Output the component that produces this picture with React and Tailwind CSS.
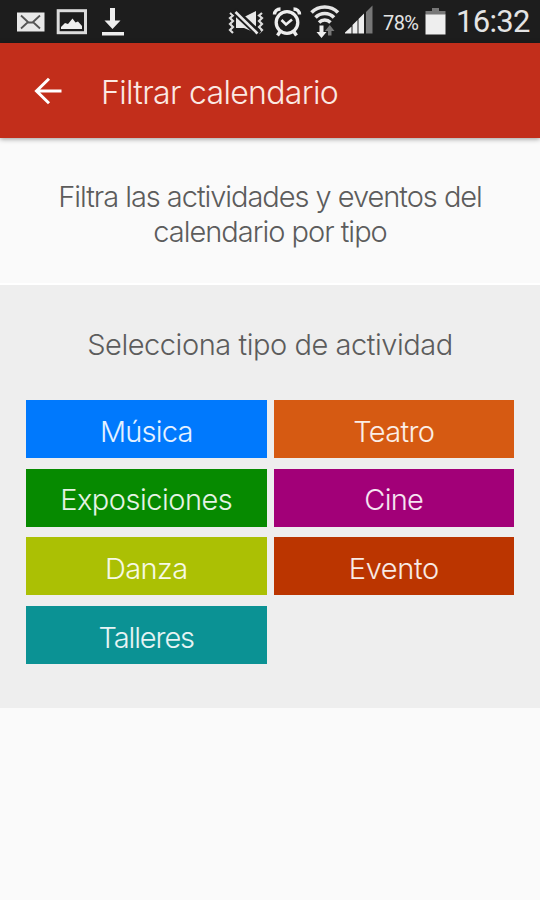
import clsx from 'clsx';

const categories = [
  { name: 'Música', color: 'bg-[#0079fd]', text: 'tracking-[-0.8px]' },
  { name: 'Teatro', color: 'bg-[#d65a12]', text: 'tracking-[-0.7px]' },
  { name: 'Exposiciones', color: 'bg-[#068a00]', text: 'tracking-[-0.5px]' },
  { name: 'Cine', color: 'bg-[#a20078]', text: 'tracking-[-0.7px]' },
  { name: 'Danza', color: 'bg-[#abc004]', text: 'tracking-[-0.6px]' },
  { name: 'Evento', color: 'bg-[#bb3500]', text: 'tracking-[-0.4px]' },
  { name: 'Talleres', color: 'bg-[#0b9294]', text: 'tracking-[-1.1px]' },
];

function NotificationIcons() {
  return (
    <svg className="block h-[43px] w-[130px]" viewBox="0 0 130 43" fill="none">
      <rect x="17" y="12.500" width="27.500" height="19" fill="#e8e8e8" />
      <path d="M21 15.500l7.500 7h4l7.500-7M21 28.500l6.500-6M40 28.500l-6.500-6" stroke="#555" strokeWidth="1.800" />
      <rect x="58.200" y="10.700" width="27.300" height="22" stroke="#dcdcdc" strokeWidth="3" />
      <path d="M61 29v-2l4-4 3 1 4.500-5.500 3 4 2.500-1 4 4.500v3z" fill="#eee" />
      <path d="M110 8h5v12.500h5.500L112.500 29l-8-8.500h5.500z" fill="#eee" />
      <rect x="102" y="32" width="22" height="3.500" fill="#eee" />
    </svg>
  );
}

function SystemIcons() {
  return (
    <svg className="block h-[43px] w-[150px]" viewBox="225 0 150 43" fill="none">
      {/* silent */}
      <path d="M230 13l3 2.500-3 2.500 3 3-3 3 3 3-3 3 3 3M262 13l-3 2.500 3 2.500-3 3 3 3-3 3 3 3-3 3" stroke="#ddd" strokeWidth="2.200" />
      <path d="M236 16.500v11.500h8l12 5V11l-11 5.500z" fill="#e8e8e8" />
      <path d="M234 10.500l25 23.500" stroke="#1d1d1d" strokeWidth="7" />
      <path d="M235.500 12l22 21.500" stroke="#e8e8e8" strokeWidth="2.600" />
      {/* alarm */}
      <circle cx="287" cy="22.500" r="10.800" stroke="#eee" strokeWidth="3.300" />
      <path d="M281.500 20l4.500 4.500 6-5" stroke="#eee" strokeWidth="2.600" />
      <path d="M274.500 14.500c0-3.500 2.500-5.500 6-5.500M299.500 14.500c0-3.500-2.500-5.500-6-5.500M280.500 31l-3 4.500M293.500 31l3 4.500" stroke="#eee" strokeWidth="3.400" />
      {/* wifi */}
      <path d="M311.500 12.500c7-7.500 19.500-7.500 26.500 0M315.500 17.500c5-5.300 13.500-5.300 18.500 0M319 22.500c3.200-3.200 8.300-3.200 11.500 0" stroke="#e6e6e6" strokeWidth="3.500" />
      <path d="M319.500 25.500h4v6.500h3l-5 6-5-6h3z" fill="#eee" />
      <path d="M328 35.500h3.500v-4.500h3l-4.700-6-4.800 6h3z" fill="#777" />
      {/* signal */}
      <path d="M345 33.500v-1l6.500-6v7z" fill="#eee" />
      <path d="M352.500 33.500v-8.500l5-5v13.500zM358.500 33.500V19l5.500-5.500v20z" fill="#eee" />
      <path d="M366 33.500V12l6.500-6.500v28z" fill="#777" />
    </svg>
  );
}

function StatusBar() {
  return (
    <div className="flex h-[43px] items-center justify-between bg-[#1d1d1d] font-[Roboto,sans-serif] text-[#e4e4e4]">
      <NotificationIcons />
      <div className="flex items-center">
        <SystemIcons />
        <span className="ml-2 w-[38px] pt-0.5 text-[20px] tracking-[-0.6px]">78%</span>
        <svg className="ml-[4px] block h-[43px] w-[22px]" viewBox="0 0 22 43">
          <path d="M7 8h7v3h6.500v4h-20v-4H7z" fill="#777" />
          <rect x="0.500" y="14.500" width="20" height="20" fill="#eee" />
        </svg>
        <span className="mr-[9px] ml-[9px] w-[75px] text-[31px] leading-[43px] tracking-[-0.7px] whitespace-nowrap">16:32</span>
      </div>
    </div>
  );
}

function CategoryButton({ name, color, text }) {
  return (
    <button
      type="button"
      className={clsx('flex h-[58px] items-center justify-center pt-[5px] text-[29px] font-light text-white/90', color, text)}
    >
      {name}
    </button>
  );
}

export default function App() {
  return (
    <div className="flex h-[900px] w-[540px] flex-col overflow-hidden bg-[#fafafa] font-[Inter,'Liberation_Sans',sans-serif]">
      <StatusBar />
      <header className="z-10 flex h-[95px] shrink-0 items-center bg-[#c22e1b] shadow-[0_1px_5px_rgba(0,0,0,0.4)]">
        <button type="button" className="ml-[34px]" aria-label="Volver">
          <svg className="block h-[28px] w-[28px]" viewBox="0 0 28 28" fill="none" stroke="#fff" strokeWidth="3">
            <path d="M27.500 14H3M15 1.800L2.500 14 15 26.200" />
          </svg>
        </button>
        <h1 className="ml-[39px] pt-1 text-[32px] font-light tracking-[-0.68px] whitespace-nowrap text-[#fbe9e3]">Filtrar calendario</h1>
      </header>

      <section className="flex h-[147px] shrink-0 flex-col items-center border-b-2 border-white pt-[41px] text-[29px] leading-[35px] font-light text-[#5c5c5c]">
        <p className="tracking-[-1.04px] whitespace-nowrap">Filtra las actividades y eventos del</p>
        <p className="tracking-[-1px] whitespace-nowrap">calendario por tipo</p>
      </section>

      <section className="h-[423px] shrink-0 bg-[#eee] px-[26px] pt-[42px]">
        <h2 className="text-center text-[29px] leading-[35px] font-light tracking-[-0.45px] whitespace-nowrap text-[#5c5c5c]">
          Selecciona tipo de actividad
        </h2>
        <div className="mt-[38px] grid grid-cols-2 gap-x-[7px] gap-y-[10.600px]">
          {categories.map((category) => (
            <CategoryButton key={category.name} {...category} />
          ))}
        </div>
      </section>
    </div>
  );
}
